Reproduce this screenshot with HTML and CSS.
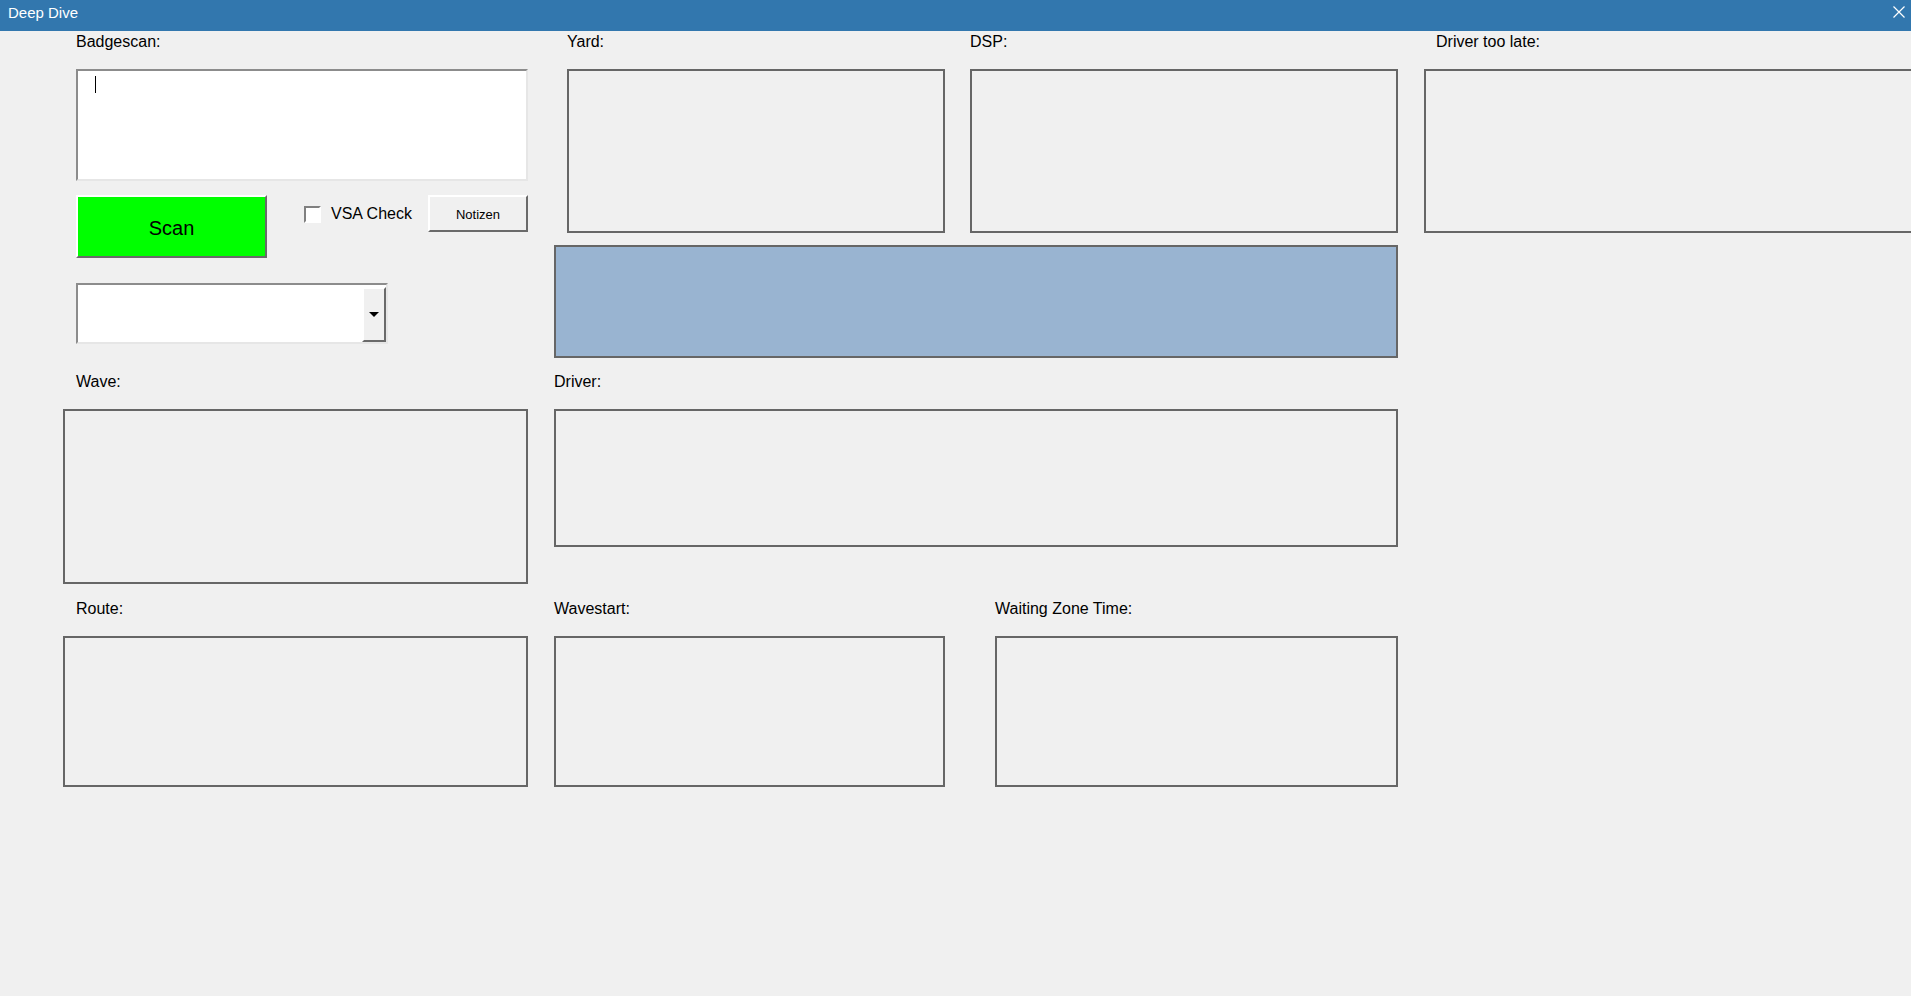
FILE: index.html
```html
<!DOCTYPE html>
<html lang="de">

<head>
    <meta charset="UTF-8">
    <meta name="viewport" content="width=device-width, initial-scale=1.0">
    <title>Deep Dive</title>
    <link rel="stylesheet" href="styles.css">
</head>

<body>
    <div class="titlebar">
        <span class="title">Deep Dive</span>
        <svg class="close" width="12" height="12" viewBox="0 0 12 12">
            <path d="M0.5 0.5 L11.5 11.5 M11.5 0.5 L0.5 11.5" stroke="#fff" stroke-width="1.2" fill="none" />
        </svg>
    </div>

    <div class="form">
        <!-- Obere Zeile: Scan, Yard, DSP, Driver too late -->
        <div class="row row-top">
            <div class="col-left">
                <div class="lbl">Badgescan:</div>
                <div class="textbox"><span class="caret"></span></div>
                <div class="actions">
                    <button class="btn-scan">Scan</button>
                    <label class="check"><span class="check-box"></span>VSA Check</label>
                    <button class="btn-notes">Notizen</button>
                </div>
                <div class="combo">
                    <div class="combo-btn"><span class="arrow"></span></div>
                </div>
            </div>

            <div class="col-mid">
                <div class="pair">
                    <div class="field yard">
                        <div class="lbl">Yard:</div>
                        <div class="out h-top"></div>
                    </div>
                    <div class="field dsp">
                        <div class="lbl">DSP:</div>
                        <div class="out h-top"></div>
                    </div>
                </div>
                <div class="status"></div>
            </div>

            <div class="col-right">
                <div class="lbl indent-right">Driver too late:</div>
                <div class="out h-top"></div>
            </div>
        </div>

        <!-- Mittlere Zeile: Wave, Driver -->
        <div class="row row-mid">
            <div class="field wide-left">
                <div class="lbl indent">Wave:</div>
                <div class="out h-wave"></div>
            </div>
            <div class="field wide-mid">
                <div class="lbl">Driver:</div>
                <div class="out h-driver"></div>
            </div>
        </div>

        <!-- Untere Zeile: Route, Wavestart, Waiting Zone Time -->
        <div class="row row-bottom">
            <div class="field wide-left">
                <div class="lbl indent">Route:</div>
                <div class="out h-bottom"></div>
            </div>
            <div class="field wavestart">
                <div class="lbl">Wavestart:</div>
                <div class="out h-bottom"></div>
            </div>
            <div class="field waiting">
                <div class="lbl">Waiting Zone Time:</div>
                <div class="out h-bottom"></div>
            </div>
        </div>
    </div>
</body>

</html>
```

FILE: styles.css
```css
* {
    box-sizing: border-box;
}

html,
body {
    margin: 0;
}

body {
    font-family: "Liberation Sans", Arial, sans-serif;
    background-color: #f0f0f0;
    color: #000;
    height: 100vh;
    overflow: hidden;
}

.titlebar {
    height: 31px;
    background-color: #3277ae;
    color: #fff;
    font-size: 15px;
    line-height: 17px;
    display: flex;
    justify-content: space-between;
    align-items: flex-start;
    padding: 4px 6px 0 8px;
}

.close {
    margin-top: 2px;
}

.form {
    padding: 1px 0 0 63px;
}

.row {
    display: flex;
    align-items: flex-start;
    gap: 26px;
}

.row-mid {
    margin-top: 14px;
}

.row-bottom {
    margin-top: 15px;
}

.lbl {
    height: 18px;
    padding-top: 1px;
    line-height: 18px;
    font-size: 16px;
    margin-bottom: 19px;
    white-space: nowrap;
}

.indent {
    padding-left: 13px;
}

.indent-right {
    padding-left: 12px;
}

.col-left {
    width: 465px;
    flex: none;
    padding-left: 13px;
}

.textbox {
    height: 112px;
    background: #fff;
    border: 2px solid;
    border-color: #8c8c8c #e6e6e6 #e6e6e6 #8c8c8c;
    padding: 5px 0 0 17px;
}

.caret {
    display: block;
    width: 1px;
    height: 17px;
    background: #000;
}

.actions {
    display: flex;
    align-items: flex-start;
    margin-top: 14px;
}

.btn-scan {
    width: 191px;
    height: 63px;
    padding: 4px 0 0;
    background-color: #00ff00;
    border: 2px solid;
    border-color: #fff #6a6a6a #6a6a6a #fff;
    font-family: "Liberation Sans", Arial, sans-serif;
    font-size: 20px;
    color: #000;
}

.check {
    display: flex;
    align-items: center;
    gap: 10px;
    margin: 10px 0 0 37px;
    font-size: 16px;
    line-height: 18px;
}

.check-box {
    width: 17px;
    height: 17px;
    background: #fff;
    border: 2px solid;
    border-color: #808080 #fff #fff #808080;
}

.btn-notes {
    margin-left: auto;
    width: 100px;
    height: 37px;
    padding: 2px 0 0;
    background-color: #f0f0f0;
    border: 2px solid;
    border-color: #fff #6a6a6a #6a6a6a #fff;
    font-family: "Liberation Sans", Arial, sans-serif;
    font-size: 13px;
    color: #000;
}

.combo {
    margin-top: 25px;
    width: 312px;
    height: 61px;
    background: #fff;
    border: 2px solid;
    border-color: #8c8c8c #e6e6e6 #e6e6e6 #8c8c8c;
    display: flex;
    justify-content: flex-end;
    padding-top: 2px;
}

.combo-btn {
    width: 24px;
    height: 55px;
    background-color: #f0f0f0;
    border: 2px solid;
    border-color: #fff #6a6a6a #6a6a6a #fff;
    display: flex;
    align-items: center;
    justify-content: center;
}

.arrow {
    width: 0;
    height: 0;
    border-left: 5px solid transparent;
    border-right: 5px solid transparent;
    border-top: 5px solid #000;
}

.col-mid {
    width: 844px;
    flex: none;
}

.pair {
    display: flex;
    gap: 25px;
    padding-left: 13px;
}

.yard {
    width: 378px;
}

.dsp {
    width: 428px;
}

.col-right {
    width: 520px;
    flex: none;
}

.out {
    border: 2px solid #666;
}

.h-top {
    height: 164px;
}

.status {
    margin-top: 12px;
    height: 113px;
    background-color: #99b4d1;
    border: 2px solid #666;
}

.field {
    flex: none;
}

.wide-left {
    width: 465px;
}

.wide-mid {
    width: 844px;
}

.h-wave {
    height: 175px;
}

.h-driver {
    height: 138px;
}

.h-bottom {
    height: 151px;
}

.wavestart {
    width: 391px;
}

.waiting {
    width: 403px;
    margin-left: 24px;
}
```
